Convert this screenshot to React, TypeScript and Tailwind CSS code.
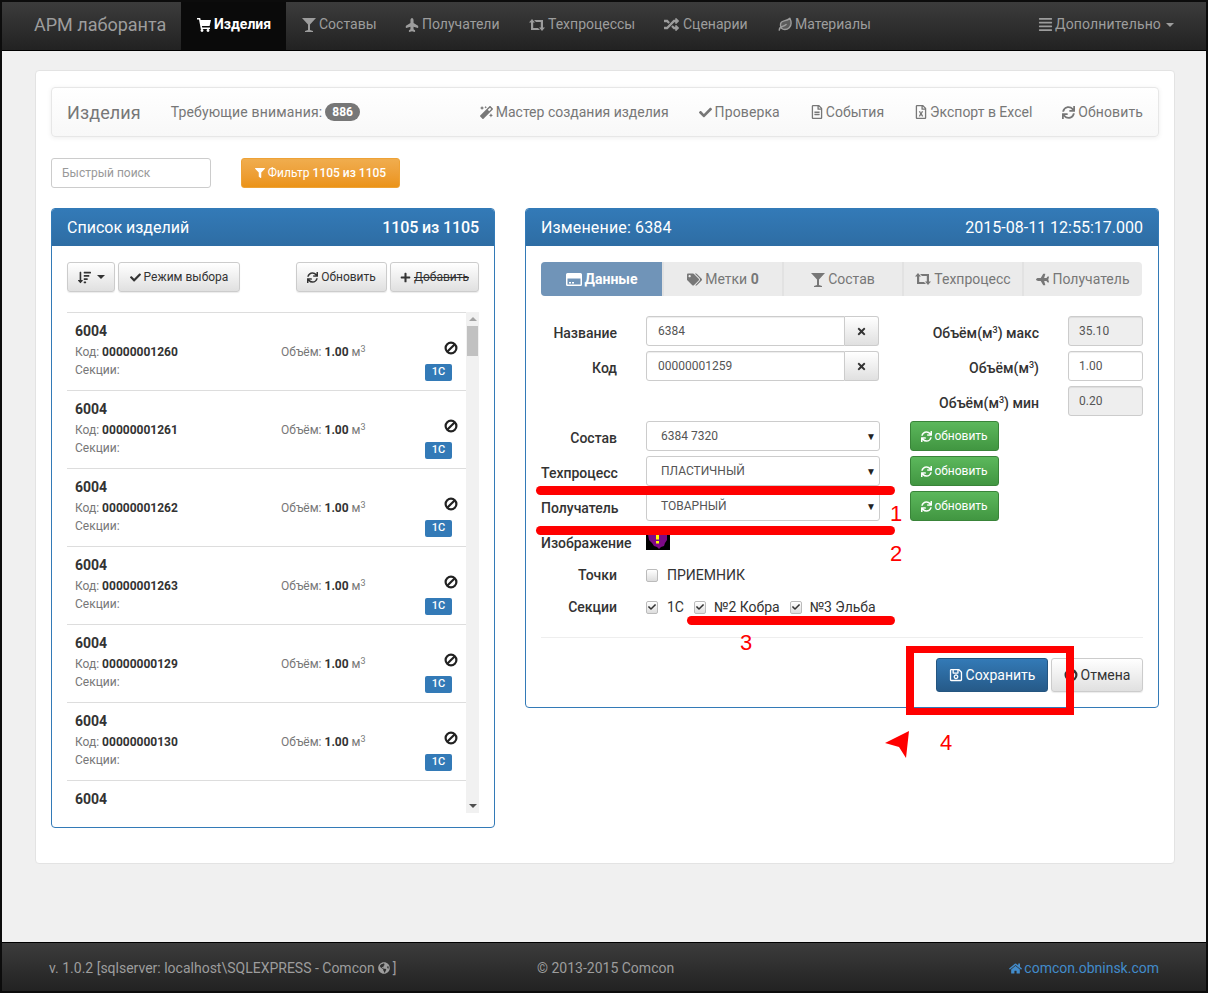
import type { ReactNode } from "react";
import {
  FaCheck,
  FaFilter,
  FaGlobeAmericas,
  FaHome,
  FaMagic,
  FaPlane,
  FaPlus,
  FaRandom,
  FaRegFileAlt,
  FaRegFileExcel,
  FaRegSave,
  FaSortAmountDown,
  FaSync,
  FaTags,
  FaTimes,
  FaAlignJustify,
} from "react-icons/fa";
import { Leaf } from "lucide-react";

const font = "font-['Roboto','Noto_Sans',sans-serif]";

const items = ["00000001260", "00000001261", "00000001262", "00000001263", "00000000129", "00000000130"];

function CartIcon() {
  return (
    <svg width="14" height="15" viewBox="0 0 14 15" fill="currentColor">
      <path d="M0 1h3.2l.5 2H14l-1.4 6H4.9l.3 1.5H13V12H3.8L2 2.5H0z" />
      <circle cx="5" cy="13.5" r="1.4" />
      <circle cx="11" cy="13.5" r="1.4" />
    </svg>
  );
}

function GlassIcon() {
  return (
    <svg width="14" height="15" viewBox="0 0 14 15" fill="currentColor">
      <path d="M0 1h14L8 7.5V13l3 1v1H3v-1l3-1V7.500z" />
    </svg>
  );
}

function RetweetIcon() {
  return (
    <svg width="16" height="14" viewBox="0 0 16 14" fill="currentColor">
      <path d="M3 1l3 3.500H4.200V10H9l2 2H2V4.500H0z" />
      <path d="M13 13l-3-3.500h1.800V4H7L5 2h9v7.500h2z" />
    </svg>
  );
}

function CardIcon() {
  return (
    <svg width="16" height="13" viewBox="0 0 16 13" fill="currentColor">
      <path d="M1.500 0h13A1.500 1.500 0 0 1 16 1.500v10a1.500 1.500 0 0 1-1.500 1.500h-13A1.500 1.500 0 0 1 0 11.500v-10A1.500 1.500 0 0 1 1.500 0zM1.500 5.500v6h13v-6z" fillRule="evenodd" />
      <rect x="3" y="9" width="2" height="1.500" />
      <rect x="6" y="9" width="2" height="1.500" />
    </svg>
  );
}

function BanIcon({ className }: { className: string }) {
  return (
    <svg className={className} width="14" height="14" viewBox="0 0 14 14" fill="none" stroke="currentColor" strokeWidth="2.2">
      <circle cx="7" cy="7" r="5.400" />
      <path d="M3.200 10.800l7.600-7.600" />
    </svg>
  );
}

function NavItem({ icon, label, active, w, iconW }: { icon: ReactNode; label: string; active?: boolean; w: string; iconW: string }) {
  return (
    <div
      className={
        (active
          ? "flex h-full items-center bg-[#0a0a0a] pb-[3px] pl-4 text-[14px] font-bold text-white "
          : "flex h-full items-center pb-[3px] pl-4 text-[14px] text-[#9d9d9d] ") + w
      }
    >
      <span className={iconW}>{icon}</span>
      <span>{label}</span>
    </div>
  );
}

function SubLink({ icon, label, wide }: { icon: ReactNode; label: string; wide?: boolean }) {
  return (
    <div className="flex items-center text-[14px] text-[#777]">
      <span className="w-[16px]">{icon}</span>
      <span className={wide ? "tracking-[0.12px]" : ""}>{label}</span>
    </div>
  );
}

function GrayButton({ children, className }: { children: ReactNode; className: string }) {
  return (
    <div
      className={
        "flex items-center justify-center gap-[3px] rounded-[3px] border border-[#ccc] bg-gradient-to-b from-white to-[#e0e0e0] text-[12px] text-[#333] shadow-[0_1px_1px_rgba(0,0,0,0.08)] " +
        className
      }
    >
      {children}
    </div>
  );
}

function ListItem({ code }: { code: string }) {
  return (
    <div className="relative h-[78px] border-t border-[#ddd] px-2 pt-[9px] text-[12px] text-[#777]">
      <div className="text-[14px] leading-[18px] font-bold text-[#333]">6004</div>
      <div className="mt-[3px] flex h-[18px] items-center">
        <div className="w-[206px]">
          Код: <b className="text-[#333]">{code}</b>
        </div>
        <div>
          Объём: <b className="text-[#333]">1.00</b> м<sup className="text-[9px]">3</sup>
        </div>
        <BanIcon className="ml-auto -mt-[8px] text-[#222]" />
      </div>
      <div className="flex h-[18px] items-center">
        <span>Секции:</span>
        <span className="ml-auto mr-[6px] mt-[4px] flex h-[17px] w-[27px] items-center justify-center rounded-[2px] bg-[#337ab7] text-[11px] font-medium text-white">
          1С
        </span>
      </div>
    </div>
  );
}

function Field({ value, muted, className }: { value: string; muted?: boolean; className: string }) {
  return (
    <input
      readOnly
      value={value}
      className={
        "h-[30px] border border-[#ccc] px-[10px] text-[12px] text-[#555] shadow-[inset_0_1px_1px_rgba(0,0,0,0.075)] outline-none " +
        (muted ? "bg-[#eee] " : "bg-white ") +
        className
      }
    />
  );
}

function Label({ text, sup, tail }: { text: string; sup?: boolean; tail?: string }) {
  return (
    <span className="whitespace-nowrap text-[14px] font-medium text-[#333]">
      {text}
      {sup && <sup className="text-[9px]">3</sup>}
      {tail}
    </span>
  );
}

function FormRow({ label, value }: { label: string; value: string }) {
  return (
    <div className="flex h-[30px] items-center">
      <div className="w-[76px] shrink-0 pt-[3px] text-right">
        <Label text={label} />
      </div>
      <Field value={value} className="ml-[29px] w-[199px] rounded-l-[3px] pl-[11px]" />
      <div className="flex h-[30px] w-[34px] items-center justify-center rounded-r-[3px] border border-l-0 border-[#ccc] bg-gradient-to-b from-white to-[#e0e0e0] text-[11px] text-[#333]">
        <FaTimes />
      </div>
    </div>
  );
}

function SelectRow({ label, value, right }: { label: string; value: string; right?: boolean }) {
  return (
    <div className="flex h-[30px] items-center">
      <div className={right ? "w-[76px] shrink-0 pt-[3px] text-right" : "w-[76px] shrink-0 pt-[3px]"}>
        <Label text={label} />
      </div>
      <div className="ml-[29px] flex h-[30px] w-[234px] items-center justify-between rounded-[3px] border border-[#ccc] bg-white pl-[14px] pr-[3px] text-[12px] text-[#555]">
        <span>{value}</span>
        <span className="text-[10px] text-[#222]">▼</span>
      </div>
      <div className="ml-[30px] flex h-[30px] w-[89px] items-center justify-center gap-[2px] rounded-[3px] border border-[#398439] bg-gradient-to-b from-[#5cb85c] to-[#419641] text-[12px] text-white">
        <FaSync className="text-[11px]" />
        обновить
      </div>
    </div>
  );
}

function Check({ on }: { on?: boolean }) {
  return (
    <span className="flex h-[13px] w-[12px] shrink-0 items-center justify-center rounded-[2px] border border-[#bbb] bg-gradient-to-b from-white to-[#ddd] text-[8px] text-[#333]">
      {on && <FaCheck />}
    </span>
  );
}

function Tab({ icon, label, active, w }: { icon: ReactNode; label: ReactNode; active?: boolean; w: string }) {
  return (
    <div
      className={
        "flex h-full items-center justify-center gap-[3px] text-[14px] " +
        w +
        (active ? " bg-[#7094b8] font-bold text-white" : " border-l-2 border-[#e2e2e2] text-[#777]")
      }
    >
      {icon}
      {label}
    </div>
  );
}

function Annotations() {
  return (
    <div className="pointer-events-none absolute inset-0 font-['Liberation_Sans',sans-serif] text-[22px] text-[#f00]">
      <div className="absolute left-[534px] top-[484px] h-[9px] w-[359px] rounded-full bg-[#f00]" />
      <div className="absolute left-[534px] top-[524px] h-[9px] w-[359px] rounded-full bg-[#f00]" />
      <div className="absolute left-[685px] top-[614px] h-[9px] w-[208px] rounded-full bg-[#f00]" />
      <div className="absolute left-[904px] top-[644px] h-[69px] w-[168px] border-x-[8px] border-y-[7px] border-[#f00]" />
      <span className="absolute left-[888px] top-[495px]">1</span>
      <span className="absolute left-[888px] top-[535px]">2</span>
      <span className="absolute left-[738px] top-[624px]">3</span>
      <span className="absolute left-[938px] top-[724px]">4</span>
      <svg className="absolute left-[882px] top-[728px]" width="28" height="30" viewBox="0 0 28 30">
        <polygon points="1,13 25,1 22,28 15,17" fill="#f00" />
      </svg>
    </div>
  );
}

export default function App() {
  return (
    <div className={"relative flex h-[993px] w-full flex-col border-2 border-[#0c0c0c] bg-[#f0f0f0] " + font}>
      <nav className="flex h-[49px] shrink-0 items-center border-b border-black bg-gradient-to-b from-[#3c3c3c] to-[#222] pl-[32px] pr-[32px]">
        <div className="w-[147px] pb-[3px] text-[18px] text-[#9d9d9d]">АРМ лаборанта</div>
        <NavItem active w="w-[105px]" iconW="w-[17px]" icon={<CartIcon />} label="Изделия" />
        <NavItem w="w-[103px]" iconW="w-[17px]" icon={<GlassIcon />} label="Составы" />
        <NavItem w="w-[124px]" iconW="w-[17px]" icon={<FaPlane className="-rotate-90 text-[14px]" />} label="Получатели" />
        <NavItem w="w-[135px]" iconW="w-[19px]" icon={<RetweetIcon />} label="Техпроцессы" />
        <NavItem w="w-[114px]" iconW="w-[19px]" icon={<FaRandom className="text-[15px]" />} label="Сценарии" />
        <NavItem w="w-[130px]" iconW="w-[17px]" icon={<Leaf size={15} strokeWidth={2.2} fill="currentColor" fillOpacity={0.4} />} label="Материалы" />
        <div className="ml-auto flex items-center pb-[3px] text-[14px] text-[#9d9d9d]">
          <span className="w-[17px]">
            <FaAlignJustify className="text-[15px]" />
          </span>
          <span className="tracking-[0.15px]">Дополнительно</span>
          <span className="ml-[5px] h-0 w-0 border-x-4 border-t-4 border-x-transparent border-t-[#9d9d9d]" />
        </div>
      </nav>

      <main className="flex-1">
        <div className="ml-[33px] mr-[31px] mt-[19px] h-[794px] rounded-[4px] border border-[#e3e3e3] bg-white px-[15px] pt-[16px]">
          <div className="flex h-[50px] items-center rounded-[4px] border border-[#e7e7e7] bg-gradient-to-b from-white to-[#f8f8f8] pl-[15px] pr-[15px] shadow-[0_1px_5px_rgba(0,0,0,0.07)]">
            <span className="text-[18px] tracking-[0.1px] text-[#777]">Изделия</span>
            <span className="ml-[30px] text-[14px] tracking-[0.15px] text-[#777]">Требующие внимания:</span>
            <span className="ml-[3px] rounded-[10px] bg-[#777] px-[7px] py-[2px] text-[12px] leading-[14px] font-bold text-white">886</span>
            <div className="ml-auto flex items-center gap-[30px]">
              <SubLink icon={<FaMagic className="text-[13px]" />} label="Мастер создания изделия" />
              <SubLink wide icon={<FaCheck className="text-[13px]" />} label="Проверка" />
              <SubLink icon={<FaRegFileAlt className="text-[14px]" />} label="События" />
              <SubLink icon={<FaRegFileExcel className="text-[14px]" />} label="Экспорт в Excel" />
              <SubLink wide icon={<FaSync className="text-[13px]" />} label="Обновить" />
            </div>
          </div>

          <div className="mt-[21px] flex items-center gap-[30px]">
            <input
              placeholder="Быстрый поиск"
              className="h-[30px] w-[160px] rounded-[3px] border border-[#ccc] bg-white px-[10px] text-[12px] text-[#555] placeholder:text-[#999]"
            />
            <div className="flex h-[30px] w-[159px] items-center justify-center gap-[3px] rounded-[3px] border border-[#eea236] bg-gradient-to-b from-[#f0ad4e] to-[#eb9316] text-[12px] text-white">
              <FaFilter className="text-[10px]" />
              Фильтр <b className="font-medium">1105 из 1105</b>
            </div>
          </div>

          <div className="mt-[20px] flex items-start gap-[30px]">
            <section className="h-[620px] w-[444px] rounded-[4px] border border-[#337ab7] bg-white">
              <header className="flex h-[37px] items-center justify-between rounded-t-[3px] bg-gradient-to-b from-[#337ab7] to-[#2e6da4] px-[15px] text-[16px] text-white">
                <span>Список изделий</span>
                <b className="font-medium tracking-[-0.1px]">1105 из 1105</b>
              </header>
              <div className="px-[15px] pt-[16px]">
                <div className="flex h-[30px] items-center gap-[3px]">
                  <GrayButton className="h-full w-[48px]">
                    <FaSortAmountDown className="text-[13px]" />
                    <span className="ml-[3px] h-0 w-0 border-x-4 border-t-4 border-x-transparent border-t-[#333]" />
                  </GrayButton>
                  <GrayButton className="h-full w-[122px]">
                    <FaCheck className="text-[11px]" />
                    Режим выбора
                  </GrayButton>
                  <GrayButton className="ml-auto h-full w-[91px]">
                    <FaSync className="text-[11px]" />
                    Обновить
                  </GrayButton>
                  <GrayButton className="h-full w-[89px]">
                    <FaPlus className="text-[11px]" />
                    <s>Добавить</s>
                  </GrayButton>
                </div>
                <div className="mt-[20px] flex h-[501px]">
                  <div className="min-w-0 flex-1 overflow-hidden">
                    {items.map((code) => (
                      <ListItem key={code} code={code} />
                    ))}
                    <div className="border-t border-[#ddd] px-2 pt-[9px] text-[14px] leading-[18px] font-bold text-[#333]">6004</div>
                  </div>
                  <div className="relative flex w-[13px] shrink-0 flex-col items-center justify-between bg-[#f1f1f1] py-[5px]">
                    <span className="h-0 w-0 border-x-[4px] border-b-[4px] border-x-transparent border-b-[#a3a3a3]" />
                    <span className="absolute left-px top-[14px] h-[30px] w-[11px] bg-[#c1c1c1]" />
                    <span className="h-0 w-0 border-x-[4px] border-t-[4px] border-x-transparent border-t-[#505050]" />
                  </div>
                </div>
              </div>
            </section>

            <section className="h-[500px] w-[634px] rounded-[4px] border border-[#337ab7] bg-white">
              <header className="flex h-[37px] items-center justify-between rounded-t-[3px] bg-gradient-to-b from-[#337ab7] to-[#2e6da4] px-[15px] text-[16px] text-white">
                <span className="tracking-[0.15px]">Изменение: 6384</span>
                <span>2015-08-11 12:55:17.000</span>
              </header>
              <div className="px-[15px] pt-[16px]">
                <div className="flex h-[34px] w-[601px] overflow-hidden rounded-[4px] bg-[#ebebeb]">
                  <Tab active w="w-[121px]" icon={<CardIcon />} label="Данные" />
                  <Tab w="w-[120px]" icon={<FaTags className="text-[15px]" />} label={<span>Метки <b>0</b></span>} />
                  <Tab w="w-[120px]" icon={<GlassIcon />} label="Состав" />
                  <Tab w="w-[120px]" icon={<RetweetIcon />} label="Техпроцесс" />
                  <Tab w="w-[120px]" icon={<FaPlane className="rotate-180 text-[13px]" />} label="Получатель" />
                </div>

                <div className="mt-[20px] flex justify-between">
                  <div className="flex flex-col gap-[5px]">
                    <FormRow label="Название" value="6384" />
                    <FormRow label="Код" value="00000001259" />
                  </div>
                  <div className="flex flex-col gap-[5px]">
                    {[
                      { tail: " макс", value: "35.10", muted: true },
                      { tail: "", value: "1.00", muted: false },
                      { tail: " мин", value: "0.20", muted: true },
                    ].map((row) => (
                      <div key={row.value} className="flex h-[30px] items-center justify-end gap-[29px]">
                        <div className="pt-[3px]">
                          <Label text="Объём(м" sup tail={")" + row.tail} />
                        </div>
                        <Field value={row.value} muted={row.muted} className="w-[75px] rounded-[3px]" />
                      </div>
                    ))}
                  </div>
                </div>

                <div className="mt-[5px] flex flex-col gap-[5px]">
                  <SelectRow right label="Состав" value="6384 7320" />
                  <SelectRow label="Техпроцесс" value="ПЛАСТИЧНЫЙ" />
                  <SelectRow label="Получатель" value="ТОВАРНЫЙ" />
                </div>

                <div className="mt-[13px] flex h-[16px] items-center">
                  <div className="w-[105px] shrink-0 pt-[2px]">
                    <Label text="Изображение" />
                  </div>
                  <svg width="24" height="16" viewBox="0 0 24 16">
                    <rect width="24" height="16" fill="#000" />
                    <path d="M2 0h19v6l-2 3-1 3-3 1-2 2-2-2-3-1-2-3-3-3z" fill="#7d0a86" />
                    <rect x="10" y="1" width="3" height="4.500" fill="#ff0" />
                    <rect x="10" y="7" width="3" height="2.500" fill="#ff0" />
                  </svg>
                </div>

                <div className="mt-[15px] flex h-[20px] items-center text-[14px] text-[#333]">
                  <div className="w-[76px] shrink-0 text-right">
                    <Label text="Точки" />
                  </div>
                  <div className="ml-[29px] flex items-center gap-[9px]">
                    <Check />
                    <span>ПРИЕМНИК</span>
                  </div>
                </div>

                <div className="mt-[12px] flex h-[20px] items-center text-[14px] text-[#333]">
                  <div className="w-[76px] shrink-0 text-right">
                    <Label text="Секции" />
                  </div>
                  <div className="ml-[29px] flex items-center">
                    <Check on />
                    <span className="ml-[9px]">1С</span>
                    <span className="ml-[10px]"><Check on /></span>
                    <span className="ml-[8px]">№2 Кобра</span>
                    <span className="ml-[10px]"><Check on /></span>
                    <span className="ml-[8px]">№3 Эльба</span>
                  </div>
                </div>

                <hr className="mt-[20px] border-[#eee]" />

                <div className="mt-[20px] flex justify-end gap-[3px]">
                  <div className="flex h-[34px] w-[112px] items-center justify-center gap-[3px] rounded-[3px] border border-[#245580] bg-gradient-to-b from-[#337ab7] to-[#265a88] text-[14px] text-white">
                    <FaRegSave className="text-[14px]" />
                    Сохранить
                  </div>
                  <GrayButton className="h-[34px] w-[92px] text-[14px]">
                    <BanIcon className="text-[#333]" />
                    Отмена
                  </GrayButton>
                </div>
              </div>
            </section>
          </div>
        </div>
      </main>

      <footer className="flex h-[49px] shrink-0 items-center border-t border-black bg-gradient-to-b from-[#3c3c3c] to-[#222] pl-[47px] pr-[47px] pt-[2px] text-[14px] text-[#9d9d9d]">
        <div className="flex w-[488px] items-center gap-[3px]">
          v. 1.0.2 [sqlserver: localhost\SQLEXPRESS - Comcon <FaGlobeAmericas className="text-[12px]" /> ]
        </div>
        <div>© 2013-2015 Comcon</div>
        <div className="ml-auto flex items-center gap-[2px] text-[#428bca]">
          <FaHome className="text-[13px]" />
          comcon.obninsk.com
        </div>
      </footer>

      <Annotations />
    </div>
  );
}
